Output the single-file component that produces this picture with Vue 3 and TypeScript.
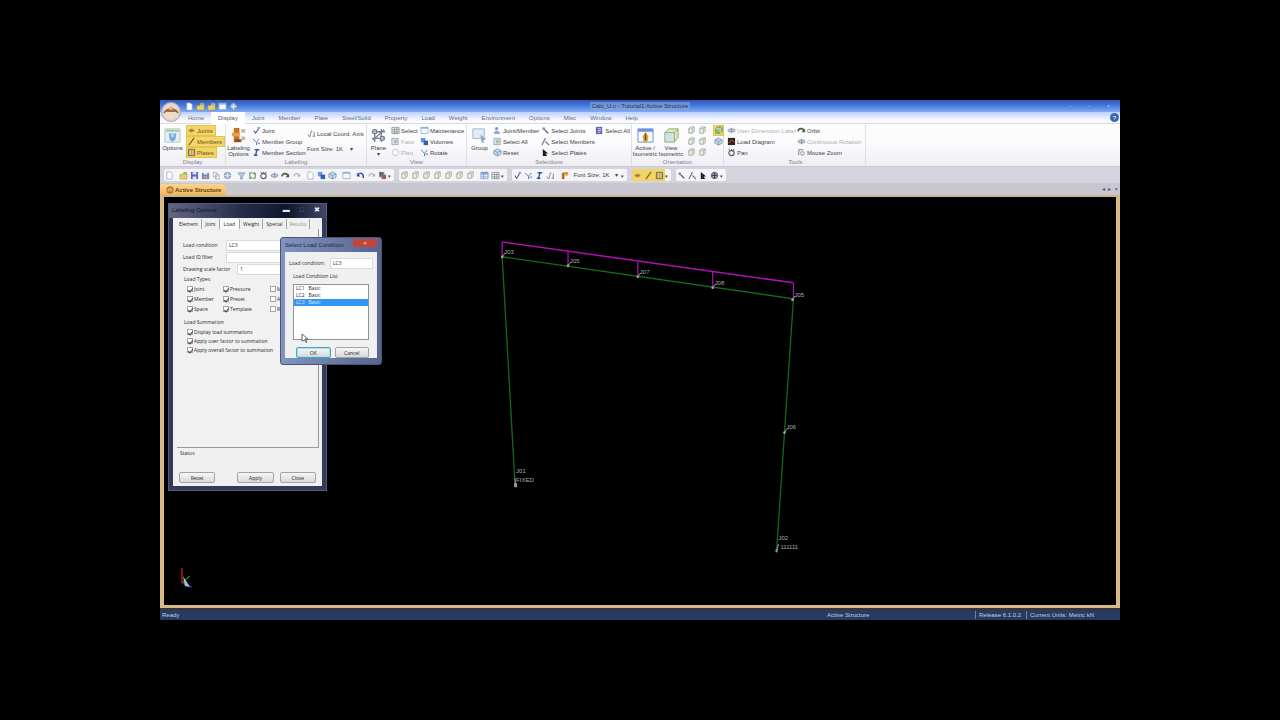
<script setup lang="ts">
import { ref } from 'vue'

interface Cmd { icon: string; label: string; dim?: boolean; on?: boolean }

const menuTabs = ['Home', 'Display', 'Joint', 'Member', 'Plate', 'Steel/Solid', 'Property', 'Load', 'Weight', 'Environment', 'Options', 'Misc', 'Window', 'Help']
const activeTab = ref('Display')

const quick = ['doc', 'folder', 'folder', 'window', 'globe']

const displayCmds: Cmd[] = [
  { icon: 'joint', label: 'Joints', on: true },
  { icon: 'member', label: 'Members', on: true },
  { icon: 'plate', label: 'Plates', on: true },
]
const labelCmds: Cmd[] = [
  { icon: 'check', label: 'Joint' },
  { icon: 'branch', label: 'Member Group' },
  { icon: 'section', label: 'Member Section' },
]
const viewCmds: Cmd[] = [
  { icon: 'grid', label: 'Select' },
  { icon: 'list', label: 'Face', dim: true },
  { icon: 'box', label: 'Plan', dim: true },
]
const viewCmds2: Cmd[] = [
  { icon: 'window', label: 'Maintenance' },
  { icon: 'blocks', label: 'Volumes' },
  { icon: 'branch', label: 'Rotate' },
]
const selCmds: Cmd[] = [
  { icon: 'person', label: 'Joint/Member' },
  { icon: 'list', label: 'Select All' },
  { icon: 'cube', label: 'Reset' },
]
const selCmds2: Cmd[] = [
  { icon: 'pick', label: 'Select Joints' },
  { icon: 'pickline', label: 'Select Members' },
  { icon: 'cursor', label: 'Select Plates' },
]
const toolCmds: Cmd[] = [
  { icon: 'orbit', label: 'User Dimension Label', dim: true },
  { icon: 'diagram', label: 'Load Diagram' },
  { icon: 'pan', label: 'Pan' },
]
const toolCmds2: Cmd[] = [
  { icon: 'redo', label: 'Orbit' },
  { icon: 'orbit', label: 'Continuous Rotation', dim: true },
  { icon: 'zoom', label: 'Mouse Zoom' },
]

const bars: string[][] = [
  ['doc', '', 'folder', 'save', 'print', 'copy', 'globe', '', 'glasses', 'refresh', 'pan', 'orbit', 'redo', 'redoDim', '', 'doc', 'blocks', 'cube', '', 'window', '', 'undo', 'redoDim', 'section2'],
  ['iso', 'iso', 'iso', 'iso', 'iso', 'iso', 'iso', '', 'table', 'grid'],
]
const bar3 = ['check', 'branch', 'section', 'axes', '', 'brush']
const bar4 = ['joint', 'member', 'plate']
const bar5 = ['pick', 'pickline', 'cursor', 'globe2']

const dialogTabs = ['Element', 'Joint', 'Load', 'Weight', 'Special', 'Results']
const loadTypes = ref([
  { label: 'Joint', on: true }, { label: 'Pressure', on: true }, { label: 'Miscellaneous', on: false },
  { label: 'Member', on: true }, { label: 'Preset', on: true }, { label: 'Auto', on: false },
  { label: 'Space', on: true }, { label: 'Template', on: true }, { label: 'Round', on: false },
])
const summations = ref([
  { label: 'Display load summations', on: true },
  { label: 'Apply user factor to summation', on: true },
  { label: 'Apply overall factor to summation', on: true },
])
const condition = ref('LC3')
const idFilter = ref('')
const scaleFactor = ref('1')
const picked = ref('LC3')
const conditions = ['LC1', 'LC2', 'LC3']

const nodes = [
  { x: 339, y: 59, name: 'J03' },
  { x: 405, y: 68, name: 'J05' },
  { x: 475, y: 79, name: 'J07' },
  { x: 550, y: 90, name: 'J08' },
  { x: 630, y: 102, name: 'J05' },
  { x: 622, y: 235, name: 'J06' },
]
const loads = [
  { x: 339, a: 44, b: 59 },
  { x: 405, a: 54, b: 68 },
  { x: 475, a: 64, b: 78 },
  { x: 550, a: 74, b: 89 },
  { x: 631, a: 85, b: 101 },
]
</script>

<template>
  <svg class="defs" aria-hidden="true">
    <symbol id="doc" viewBox="0 0 10 10"><path d="M2 1h4l2 2v6H2z" fill="#fff" stroke="#9aa5b5" stroke-width=".8" /></symbol>
    <symbol id="folder" viewBox="0 0 10 10"><path d="M1 4h3l1-2h4v7H1z" fill="#e9cf77" stroke="#a89042" stroke-width=".6" /><path d="M5 1h3v3H5z" fill="#9fb86a" /></symbol>
    <symbol id="save" viewBox="0 0 10 10"><path d="M1 1h8v8H1z" fill="#5a68c4" /><path d="M3 1h4v3H3zM3 6h4v3H3z" fill="#dde2f6" /></symbol>
    <symbol id="print" viewBox="0 0 10 10"><path d="M1 2h8v7H1z" fill="#7a86a8" /><path d="M3 1h4v3H3z" fill="#eceff5" /><path d="M3 6h4v2H3z" fill="#c9a9b5" /></symbol>
    <symbol id="copy" viewBox="0 0 10 10"><path d="M1.500 1.500h4v5h-4zM4 4h4v5H4z" fill="#f5f7fa" stroke="#96a0b2" stroke-width=".8" /></symbol>
    <symbol id="globe" viewBox="0 0 10 10"><circle cx="5" cy="5" r="3.500" fill="#a8c2dc" stroke="#6f8bae" /><path d="M1.500 5h7M5 1.500v7" stroke="#e8f1f8" stroke-width=".8" /></symbol>
    <symbol id="globe2" viewBox="0 0 10 10"><circle cx="5" cy="5" r="3.500" fill="#9aa0b8" stroke="#454b6a" /><path d="M2 5h6M5 2v6" stroke="#303655" /></symbol>
    <symbol id="glasses" viewBox="0 0 10 10"><path d="M1 2h8L6 6v3H4V6z" fill="#b5cadd" stroke="#718fae" stroke-width=".7" /></symbol>
    <symbol id="refresh" viewBox="0 0 10 10"><path d="M2 8V2h3M8 2v6H5" fill="none" stroke="#6c8f6b" stroke-width="1.200" /><path d="M6 1l3 2-3 1zM4 6L1 8l3 1z" fill="#5b855b" /></symbol>
    <symbol id="pan" viewBox="0 0 10 10"><circle cx="5" cy="5.500" r="3" fill="#f5f5f5" stroke="#555b65" stroke-width="1.200" /><path d="M2 1l2 3M5 1v2M8 1L6 4" stroke="#555b65" /></symbol>
    <symbol id="orbit" viewBox="0 0 10 10"><ellipse cx="5" cy="5" rx="4" ry="1.800" fill="#c9ced9" stroke="#8790a5" /><path d="M5 2v6" stroke="#8790a5" /></symbol>
    <symbol id="redo" viewBox="0 0 10 10"><path d="M1 6c1-4 5-4 7-1" fill="none" stroke="#456046" stroke-width="1.800" /><path d="M9 3v4H5z" fill="#456046" /></symbol>
    <symbol id="redoDim" viewBox="0 0 10 10"><path d="M2 6c1-4 4-4 6-1" fill="none" stroke="#a2a9b6" stroke-width="1.200" /><path d="M9 3v3H6z" fill="#a2a9b6" /></symbol>
    <symbol id="undo" viewBox="0 0 10 10"><path d="M2 4c3-3 7-1 6 4" fill="none" stroke="#3d4fae" stroke-width="1.600" /><path d="M1 2v4h4z" fill="#3d4fae" /></symbol>
    <symbol id="cube" viewBox="0 0 10 10"><path d="M5 1l4 2v4L5 9 1 7V3z" fill="#c6d9ee" stroke="#6f8fb7" stroke-width=".8" /><path d="M1 3l4 2 4-2M5 5v4" fill="none" stroke="#6f8fb7" stroke-width=".8" /></symbol>
    <symbol id="iso" viewBox="0 0 10 10"><path d="M2 3l2-2h4v5L6 8H2z" fill="#edf1e7" stroke="#969e8e" stroke-width=".9" /><path d="M2 3h4v5M6 3l2-2" fill="none" stroke="#a3ab99" stroke-width=".8" /></symbol>
    <symbol id="isoGreen" viewBox="0 0 10 10"><path d="M2 3l2-2h5v5L7 8H2z" fill="#8fc07c" stroke="#5c8f63" stroke-width=".9" /><path d="M2 3h5v5M7 3l2-2" fill="none" stroke="#d6ebc5" stroke-width=".8" /></symbol>
    <symbol id="blocks" viewBox="0 0 10 10"><path d="M1 1h5v5H1z" fill="#6a97d8" /><path d="M4 4h5v5H4z" fill="#2e62b0" /></symbol>
    <symbol id="window" viewBox="0 0 10 10"><path d="M1 1.500h8v7H1z" fill="#f4f8fc" stroke="#8ba6c6" stroke-width=".8" /><path d="M1 1h8v2H1z" fill="#94b2d8" /></symbol>
    <symbol id="table" viewBox="0 0 10 10"><path d="M1 1.500h8v7H1zM1 4h8M1 6.500h8M4 2v7" fill="#eef4fc" stroke="#7796c8" stroke-width=".8" /><path d="M1 1h8v2H1z" fill="#7796c8" /></symbol>
    <symbol id="grid" viewBox="0 0 10 10"><path d="M1 1.500h8v7H1zM1 4h8M1 6.500h8M4 2v7M6.500 2v7" fill="#f4f4f4" stroke="#7d8b82" stroke-width=".8" /></symbol>
    <symbol id="list" viewBox="0 0 10 10"><path d="M1 1.500h7v7H1zM3 3.500h4M3 5h4M3 6.500h4" fill="#e8ecf2" stroke="#8a93a5" stroke-width=".8" /></symbol>
    <symbol id="box" viewBox="0 0 10 10"><circle cx="5" cy="5" r="3.500" fill="#fbfbfb" stroke="#bcbcc4" /></symbol>
    <symbol id="joint" viewBox="0 0 10 10"><path d="M2 4h6v2H2zM4 3h2v4H4z" fill="#9a8640" /></symbol>
    <symbol id="member" viewBox="0 0 10 10"><path d="M2 9l6-8" stroke="#7c6523" stroke-width="1.400" /></symbol>
    <symbol id="plate" viewBox="0 0 10 10"><path d="M1.500 1.500h7v7h-7z" fill="#bba764" stroke="#6e6445" /><path d="M3.500 2v6M6.500 2v6" stroke="#e9d98f" /></symbol>
    <symbol id="check" viewBox="0 0 10 10"><path d="M2 5l2 3 4-6" fill="none" stroke="#52678f" stroke-width="1.300" /><path d="M6 1h3v2H6z" fill="#86a3da" /></symbol>
    <symbol id="branch" viewBox="0 0 10 10"><path d="M1 2l4 4v3M8 2L5 6" fill="none" stroke="#7282a3" stroke-width="1.100" /><path d="M6 6h3v2H6z" fill="#94add8" /></symbol>
    <symbol id="section" viewBox="0 0 10 10"><path d="M3 2h5M5.500 2L4 8M2 8h4" stroke="#3653a5" stroke-width="1.600" /></symbol>
    <symbol id="section2" viewBox="0 0 10 10"><path d="M1 1h6v6H1z" fill="#8b8fa0" /><path d="M4 4h5v5H4z" fill="#9d5c5c" /><path d="M2 3h4M3 1v5" stroke="#434757" /></symbol>
    <symbol id="axes" viewBox="0 0 10 10"><path d="M1 6l2 3L5 2h1M6 8h3M8 3v5" fill="none" stroke="#6d7684" stroke-width=".9" /></symbol>
    <symbol id="brush" viewBox="0 0 10 10"><path d="M2 2h3v7H2z" fill="#b2702a" /><path d="M4 1h5v4H5z" fill="#d99a4d" /></symbol>
    <symbol id="person" viewBox="0 0 10 10"><circle cx="4" cy="3" r="1.800" fill="#7d91cb" /><path d="M1 9c0-5 6-5 7 0z" fill="#92a5d6" /></symbol>
    <symbol id="pick" viewBox="0 0 10 10"><circle cx="3" cy="3" r="1.600" fill="#8b93a9" /><path d="M4 4l4 4" stroke="#4f5878" stroke-width="1.400" /></symbol>
    <symbol id="pickline" viewBox="0 0 10 10"><path d="M1 9l4-8M5 5l4 4" fill="none" stroke="#6b7492" stroke-width="1.300" /></symbol>
    <symbol id="cursor" viewBox="0 0 10 10"><path d="M2 1l6 5H5l2 3H2z" fill="#1c1e28" /></symbol>
    <symbol id="diagram" viewBox="0 0 10 10"><path d="M1 1h8v8H1z" fill="#35231b" /><path d="M2 7l3-4 3 3" fill="none" stroke="#ab6b43" /></symbol>
    <symbol id="zoom" viewBox="0 0 10 10"><path d="M2 8V2h5" fill="none" stroke="#74787f" /><circle cx="6" cy="6" r="2" fill="#f0f0f0" stroke="#8b929b" /></symbol>
    <symbol id="allsel" viewBox="0 0 10 10"><path d="M1 1h7v8H1z" fill="#5d63ac" /><path d="M3 3h4M3 5h4M3 7h3" stroke="#dcdcf5" /></symbol>
    <symbol id="bigOptions" viewBox="0 0 18 18"><path d="M1 2h16v14H1z" fill="#e6eef2" stroke="#b5c7c9" /><path d="M2 3h14v2H2z" fill="#a5c79b" /><path d="M5 7h8l-1 6-3 3-3-3z" fill="#6ea8de" /><circle cx="9" cy="9" r="2" fill="#a8d0f2" /></symbol>
    <symbol id="bigLabel" viewBox="0 0 18 18"><path d="M4 1h6v15H4z" fill="#c47224" /><path d="M2 6h8v4H2z" fill="#e3a14b" /><path d="M12 2h4v4h-4zM12 10h4v4h-4z" fill="#c9b7a6" /><path d="M5 13h7v3H5z" fill="#8b4c20" /></symbol>
    <symbol id="bigPlane" viewBox="0 0 18 18"><path d="M2 5h14M2 12h14M5 2v14M12 2v14M3 14L15 3" fill="none" stroke="#797f8d" stroke-width="1.400" /><path d="M3 3h4v4H3zM11 10h4v4h-4z" fill="#b9bfcc" stroke="#6c7283" /></symbol>
    <symbol id="bigGroup" viewBox="0 0 18 18"><path d="M2 2h12v10H2z" fill="#e2edf8" stroke="#9fb6d2" /><path d="M10 8l6 5-3 1 1 3-3-1z" fill="#8fa4c6" /></symbol>
    <symbol id="bigActive" viewBox="0 0 18 18"><path d="M1 2h16v14H1z" fill="#f4f8fd" stroke="#7294cc" /><path d="M1 2h16v3H1z" fill="#6b93d6" /><path d="M9 5l3 5-1 6H7L6 10z" fill="#e0a22c" /><path d="M9 7v7" stroke="#714d16" stroke-width="1.500" /></symbol>
    <symbol id="bigIso" viewBox="0 0 18 18"><path d="M2 6l4-4h10v9l-4 5H2z" fill="#dcebc2" stroke="#8da371" /><path d="M2 6h10v10M12 6l4-4" fill="none" stroke="#8da371" /><path d="M3 7h8v8H3z" fill="#cee3ea" /></symbol>
  </svg>

  <main class="stage">
    <div class="app">
      <header class="titlebar">
        <div class="quick">
          <button v-for="(q, i) in quick" :key="i" :aria-label="q"><svg class="ic"><use :href="'#' + q" /></svg></button>
        </div>
        <h1>Calc_U.c - Tutorial1:Active Structure</h1>
        <div class="winbtns"><span>–</span><span>▫</span><span>×</span></div>
      </header>
      <nav class="menu">
        <button v-for="t in menuTabs" :key="t" :class="{ active: t === activeTab }" @click="activeTab = t">{{ t }}</button>
        <button class="help" aria-label="About">?</button>
      </nav>
      <button class="orb" aria-label="Application menu">
        <svg viewBox="0 0 22 22"><circle cx="11" cy="11" r="9.500" fill="#d9d5dc" stroke="#b6a59f" /><circle cx="11" cy="11" r="7" fill="#f0dcc4" /><path d="M4 12c3-5 11-5 14 0M5 10h12" fill="none" stroke="#9b6b5d" stroke-width="2" /><circle cx="11" cy="7" r="2" fill="#e9b873" /></svg>
      </button>

      <section class="ribbon">
        <div class="group g-display">
          <div class="body">
            <button class="big"><svg><use href="#bigOptions" /></svg><span>Options</span></button>
            <div class="col toggles">
              <button v-for="c in displayCmds" :key="c.label" class="cmd on"><svg class="ic"><use :href="'#' + c.icon" /></svg>{{ c.label }}</button>
            </div>
          </div>
          <div class="caption">Display</div>
        </div>
        <div class="group g-label">
          <div class="body">
            <button class="big"><svg><use href="#bigLabel" /></svg><span>Labeling<br>Options</span></button>
            <div class="col c-label">
              <button v-for="c in labelCmds" :key="c.label" class="cmd"><svg class="ic"><use :href="'#' + c.icon" /></svg>{{ c.label }}</button>
            </div>
            <div class="col loose">
              <button class="cmd"><svg class="ic"><use href="#axes" /></svg>Local Coord. Axis</button>
              <button class="cmd">Font Size: 1K <span class="arrow">▾</span></button>
            </div>
          </div>
          <div class="caption">Labeling</div>
        </div>
        <div class="group g-view">
          <div class="body">
            <button class="big"><svg><use href="#bigPlane" /></svg><span>Plane<br>▾</span></button>
            <div class="col c-view">
              <button v-for="c in viewCmds" :key="c.label" class="cmd" :class="{ dim: c.dim }"><svg class="ic"><use :href="'#' + c.icon" /></svg>{{ c.label }}</button>
            </div>
            <div class="col">
              <button v-for="c in viewCmds2" :key="c.label" class="cmd"><svg class="ic"><use :href="'#' + c.icon" /></svg>{{ c.label }}</button>
            </div>
          </div>
          <div class="caption">View</div>
        </div>
        <div class="group g-sel">
          <div class="body">
            <button class="big"><svg><use href="#bigGroup" /></svg><span>Group</span></button>
            <div class="col c-sel">
              <button v-for="c in selCmds" :key="c.label" class="cmd"><svg class="ic"><use :href="'#' + c.icon" /></svg>{{ c.label }}</button>
            </div>
            <div class="col c-sel2">
              <button v-for="c in selCmds2" :key="c.label" class="cmd"><svg class="ic"><use :href="'#' + c.icon" /></svg>{{ c.label }}</button>
            </div>
            <div class="col">
              <button class="cmd"><svg class="ic"><use href="#allsel" /></svg>Select All</button>
            </div>
          </div>
          <div class="caption">Selections</div>
        </div>
        <div class="group g-orient">
          <div class="body">
            <button class="big"><svg><use href="#bigActive" /></svg><span>Active /<br>Isometric</span></button>
            <button class="big"><svg><use href="#bigIso" /></svg><span>View<br>Isometric</span></button>
            <div class="isos">
              <button v-for="n in 6" :key="n" :aria-label="'View ' + n"><svg class="ic"><use href="#iso" /></svg></button>
            </div>
            <div class="col">
              <button class="cmd on" aria-label="Shaded"><svg class="ic"><use href="#isoGreen" /></svg></button>
              <button class="cmd" aria-label="Solid"><svg class="ic"><use href="#cube" /></svg></button>
            </div>
          </div>
          <div class="caption">Orientation</div>
        </div>
        <div class="group g-tools">
          <div class="body">
            <div class="col c-tools">
              <button v-for="c in toolCmds" :key="c.label" class="cmd" :class="{ dim: c.dim }"><svg class="ic"><use :href="'#' + c.icon" /></svg>{{ c.label }}</button>
            </div>
            <div class="col">
              <button v-for="c in toolCmds2" :key="c.label" class="cmd" :class="{ dim: c.dim }"><svg class="ic"><use :href="'#' + c.icon" /></svg>{{ c.label }}</button>
            </div>
          </div>
          <div class="caption">Tools</div>
        </div>
      </section>

      <div class="toolbars">
        <div v-for="(b, k) in bars" :key="k" class="bar">
          <template v-for="(n, i) in b" :key="i">
            <button v-if="n" :aria-label="n"><svg class="ic"><use :href="'#' + n" /></svg></button>
            <i v-else class="sep"></i>
          </template>
          <span class="more">▾</span>
        </div>
        <div class="bar">
          <template v-for="(n, i) in bar3" :key="i">
            <button v-if="n" :aria-label="n"><svg class="ic"><use :href="'#' + n" /></svg></button>
            <i v-else class="sep"></i>
          </template>
          <button class="fontsize">Font Size: 1K <span>▾</span></button>
          <span class="more">▾</span>
        </div>
        <div class="bar lit">
          <button v-for="n in bar4" :key="n" :aria-label="n"><svg class="ic"><use :href="'#' + n" /></svg></button>
          <span class="more">▾</span>
        </div>
        <div class="bar">
          <button v-for="n in bar5" :key="n" :aria-label="n"><svg class="ic"><use :href="'#' + n" /></svg></button>
          <span class="more">▾</span>
        </div>
      </div>

      <div class="doctabs">
        <button class="doctab"><svg viewBox="0 0 10 10"><circle cx="5" cy="5" r="4" fill="#d98e48" stroke="#94551f" /><path d="M2 6c2-3 4-3 6 0" fill="none" stroke="#fbe1bd" /></svg>Active Structure</button>
        <div class="docbtns"><span>◂</span><span>▸</span><span>×</span></div>
      </div>

      <section class="pane">
        <svg class="model" viewBox="0 -1 952 409" preserveAspectRatio="xMinYMin meet">
          <path d="M352 289L339 59L631 101L614 355" fill="none" stroke="#146b1a" stroke-width="1.300" />
          <path d="M339 44L631 85" stroke="#b010ae" stroke-width="1.500" />
          <path v-for="l in loads" :key="l.x" :d="`M${l.x} ${l.a}V${l.b}`" stroke="#9c1298" stroke-width="1.400" />
          <g v-for="n in nodes" :key="n.x">
            <path :d="`M${n.x} ${n.y}l3 -4`" stroke="#8f948f" />
            <circle :cx="n.x" :cy="n.y" r="1.300" fill="#a9a9a9" />
            <text :x="n.x + 2" :y="n.y - 3">{{ n.name }}</text>
          </g>
          <path d="M352 289v-8M614 355l2 -8" stroke="#9aa09a" />
          <path d="M351 286h3v4h-3zM613 352h2v3h-2z" fill="#9a9a9a" />
          <text x="353" y="276">J01</text>
          <text x="353" y="285">FIXED</text>
          <text x="616" y="343">J02</text>
          <text x="618" y="352">111111</text>
          <path d="M18 386V371" stroke="#b01818" stroke-width="1.500" />
          <path d="M18 386l10 4" stroke="#2222c8" stroke-width="1.500" />
          <path d="M18 386l8-7" stroke="#1c7c28" stroke-width="1.200" />
          <path d="M19 379l7 11-5-1z" fill="#b9bfc2" />
        </svg>

        <form class="dialog labeling" @submit.prevent>
          <div class="dlgtitle"><span class="name">Labeling Options</span><span class="ctl">▬</span><span class="ctl faint">□</span><span class="ctl">✖</span></div>
          <div class="client">
            <div class="dlgtabs">
              <button v-for="t in dialogTabs" :key="t" type="button" :class="{ active: t === 'Load', dim: t === 'Results' }">{{ t }}</button>
            </div>
            <div class="page">
              <div class="field"><label for="lc">Load condition</label><input id="lc" v-model="condition"></div>
              <div class="field"><label for="lid">Load ID filter</label><input id="lid" v-model="idFilter"></div>
              <div class="field wide"><label for="dsf">Drawing scale factor</label><input id="dsf" v-model="scaleFactor"></div>
              <fieldset class="types">
                <legend>Load Types</legend>
                <label v-for="t in loadTypes" :key="t.label"><input v-model="t.on" type="checkbox">{{ t.label }}</label>
              </fieldset>
              <fieldset class="sums">
                <legend>Load Summation</legend>
                <label v-for="s in summations" :key="s.label"><input v-model="s.on" type="checkbox">{{ s.label }}</label>
              </fieldset>
            </div>
            <div class="status-note">Status</div>
            <div class="actions"><button type="button" class="push first">Reset</button><button type="button" class="push">Apply</button><button type="button" class="push">Close</button></div>
          </div>
        </form>

        <form class="dialog picker" @submit.prevent>
          <div class="dlgtitle"><span class="name">Select Load Condition</span><button type="button" class="close" aria-label="Close">×</button></div>
          <div class="client">
            <div class="field"><label for="plc">Load condition:</label><input id="plc" v-model="condition"></div>
            <label class="listlabel" for="plist">Load Condition List</label>
            <select id="plist" v-model="picked" size="4">
              <option v-for="c in conditions" :key="c" :value="c">{{ c }}&nbsp;&nbsp; Basic</option>
            </select>
            <div class="actions"><button class="push ok">OK</button><button type="button" class="push">Cancel</button></div>
          </div>
          <svg class="pointer" viewBox="0 0 8 10"><path d="M1 1l6 5H4l2 3-1 .5L3.500 7 1 8z" fill="#fff" stroke="#444" stroke-width=".8" /></svg>
        </form>
      </section>

      <footer class="statusbar">
        <span class="ready">Ready</span>
        <span class="struct">Active Structure</span>
        <span class="rel">Release 6.1.0.2</span>
        <span class="units">Current Units: Metric kN</span>
      </footer>
    </div>
  </main>
</template>

<style>
body { margin: 0; background: #000; }
</style>

<style scoped>
* { box-sizing: border-box; }
.defs { position: absolute; width: 0; height: 0; }
.stage { min-height: 100vh; padding: 100px 12.5%; display: flex; background: #000; font: 6px/8px "Liberation Sans", Arial, sans-serif; color: #3b3e47; }
.app { position: relative; flex: 1; min-width: 0; display: flex; flex-direction: column; }
button { font: inherit; color: inherit; background: none; border: 0; padding: 0; margin: 0; white-space: nowrap; display: flex; align-items: center; }
input, select { font: inherit; color: inherit; }
h1 { margin: 0; font: inherit; }
.ic { width: 9px; height: 9px; flex: none; display: block; }

.titlebar { height: 12px; display: grid; grid-template-columns: 1fr auto 1fr; align-items: center; background: linear-gradient(#3259b4, #4377dd 45%, #82acf2); }
.titlebar h1 { padding: 0 2px; background: rgba(150, 170, 215, .55); color: #25365f; }
.quick { display: flex; gap: 2px; padding-left: 25px; }
.winbtns { display: flex; justify-content: flex-end; gap: 16px; padding-right: 10px; color: #aebbd0; }
.menu { height: 12px; display: flex; align-items: stretch; padding-left: 21px; background: linear-gradient(#b9d1fa, #eef3fd 60%, #fdfdff); border-bottom: 1px solid #dad9dc; color: #626d85; }
.menu button { padding: 0 7px; }
.menu .active { background: #fff; margin-bottom: -1px; color: #50596e; }
.menu .help { margin: 1px 1px 1px auto; width: 9px; height: 9px; padding: 0; justify-content: center; border-radius: 50%; background: #3b67a9; color: #fff; }
.orb { position: absolute; left: 0; top: 1px; width: 22px; height: 22px; }
.orb svg { width: 22px; height: 22px; }

.ribbon { height: 43px; display: flex; background: linear-gradient(#fefefe, #fbfbfd 45%, #eeeef3); border-bottom: 1px solid #cbcad2; }
.group { flex: none; display: flex; flex-direction: column; justify-content: space-between; border-right: 1px solid #dfdfe5; }
.body { display: flex; padding-top: 1px; }
.caption { text-align: center; color: #80838e; line-height: 7px; }
.g-display { width: 66px; }
.g-label { width: 141px; }
.g-view { width: 100px; }
.g-sel { width: 165px; }
.g-orient { width: 92px; }
.g-tools { width: 142px; padding-left: 2px; }
.big { width: 25px; flex: none; flex-direction: column; padding-top: 2px; line-height: 6px; text-align: center; }
.big svg { width: 17px; height: 17px; margin-bottom: 1px; }
.col { display: flex; flex-direction: column; align-items: flex-start; }
.cmd { height: 11px; padding: 0 1px; gap: 1px; }
.on { background: #f3d569; box-shadow: inset 0 0 0 1px #e5c34f; color: #65531f; }
.toggles { padding-left: 1px; }
.toggles .cmd { padding-right: 3px; }
.dim { color: #acafb8; }
.c-label { width: 55px; }
.loose { padding-top: 3px; gap: 4px; }
.arrow { margin-left: 6px; }
.g-view .big { width: 23px; }
.c-view { width: 29px; }
.c-sel { width: 50px; }
.c-sel2 { width: 54px; }
.isos { display: grid; grid-template-columns: 11px 11px; grid-auto-rows: 11px; margin: 0 4px 0 3px; align-items: center; }
.g-orient .cmd { width: 11px; padding: 0 1px; }
.g-orient .big { width: 26px; }
.c-tools { width: 70px; }

.toolbars { height: 16px; display: flex; align-items: center; gap: 5px; padding-left: 4px; background: #d5d4de; }
.bar { flex: none; height: 12px; display: flex; align-items: center; background: #f5f5f8; border-radius: 2px; }
.bar button { width: 11px; height: 12px; justify-content: center; }
.sep { width: 3px; }
.more { width: 6px; font-size: 5px; line-height: 12px; padding-top: 2px; }
.bar .fontsize { width: 51px; gap: 5px; }
.lit button { background: #f3d567; }

.doctabs { height: 12px; display: flex; align-items: flex-end; justify-content: space-between; background: #c8c6cf; }
.doctab { height: 11px; gap: 1px; padding: 0 5px 0 6px; background: linear-gradient(#fbd48c, #f0b75f); border-radius: 0 5px 0 0; color: #633f12; font-weight: bold; }
.doctab svg { width: 8px; height: 8px; }
.docbtns { display: flex; gap: 3px; padding-right: 2px; line-height: 11px; color: #51535d; }

.pane { position: relative; flex: 1; min-height: 409px; border: 4px solid #d9b986; border-width: 2px 4px 3px; border-top-color: #cbb58d; background: #000; }
.model { position: absolute; inset: 0; width: 100%; height: 100%; }
.model text { font: 6px "Liberation Sans", Arial, sans-serif; fill: #a9aaa9; }

.dialog { position: absolute; display: flex; flex-direction: column; }
.labeling { left: 4px; top: 6px; width: 159px; height: 288px; padding: 0 4px 4px; background: #333a5a; border: 1px solid #555b7c; }
.dlgtitle { height: 14px; display: flex; align-items: center; gap: 4px; }
.name { flex: 1; white-space: nowrap; }
.labeling .dlgtitle { margin: 0 -4px; padding: 0 6px 2px 3px; background: linear-gradient(90deg, #626784, #272e4c 45%, #10162c 75%, #3f4767); color: #1c1f30; gap: 10px; }
.labeling .name { color: #12141f; }
.ctl { color: #e9edf6; font-size: 7px; }
.faint { color: #6b7493; }
.client { flex: 1; min-height: 0; display: flex; flex-direction: column; background: #f0f0f0; color: #26272c; font: 5px/8px "Open Sans", "Liberation Sans", sans-serif; }
.dlgtabs { display: flex; padding: 1px 0 0 3px; }
.dlgtabs button { height: 10px; padding: 0 3px; border-right: 1px solid #a5a5a8; }
.dlgtabs .active { background: #fafafa; padding: 0 4px; }
.dlgtabs .dim { color: #92949a; }
.page { flex: 1; margin: 0 3px 0 4px; padding: 10px 0 0 6px; border: 0 solid #999; border-width: 0 1px 1px 0; background: #f1f1f1; overflow: hidden; }
.field { display: flex; align-items: center; height: 12px; }
.field label { width: 43px; white-space: nowrap; }
.field input { flex: 1; min-width: 0; height: 11px; padding: 0 2px; border: 1px solid #dadada; background: #fff; }
.wide label { width: 54px; }
fieldset { border: 0; margin: 0; padding: 0 0 0 4px; min-width: 0; }
legend { padding: 0; margin-left: -3px; }
.types { display: grid; grid-template-columns: 36px 47px 1fr; grid-auto-rows: 10px; align-items: center; padding-top: 1px; }
.sums { display: grid; grid-auto-rows: 9px; align-items: center; margin-top: 4px; padding-top: 1px; }
fieldset label { display: flex; align-items: center; gap: 1px; white-space: nowrap; }
input[type="checkbox"] { appearance: none; flex: none; width: 6px; height: 6px; margin: 0; border: 1px solid #a3a5ab; background: #fff; display: grid; place-items: center; }
input[type="checkbox"]:checked::after { content: ""; width: 2px; height: 4px; border: solid #3d4256; border-width: 0 1px 1px 0; transform: rotate(40deg); }
.status-note { padding: 1px 7px 0; height: 24px; }
.push { height: 11px; width: 37px; justify-content: center; border: 1px solid #a3a3a6; border-radius: 2px; background: linear-gradient(#f6f6f6, #d9d9db); }
.actions { display: flex; gap: 6px; padding: 0 6px 3px; }
.first { margin-right: 16px; }

.picker { left: 116px; top: 40px; width: 102px; height: 128px; padding: 0 4px 6px; border: 1px solid #4a5474; border-radius: 3px; background: linear-gradient(90deg, #8294c0, #56648e); }
.picker .dlgtitle { padding-bottom: 1px; color: #1f2a47; }
.close { width: 24px; height: 8px; justify-content: center; background: #c2463c; border-radius: 0 0 2px 2px; color: #f3dada; margin-bottom: 4px; }
.picker .client { padding: 5px 4px 0; }
.picker .field label { width: 41px; }
.listlabel { padding: 3px 0 4px 4px; }
.picker select { appearance: none; display: block; width: 76px; height: 56px; margin-left: 4px; padding: 0; border: 1px solid #8d939c; background: #fff; overflow: hidden; border-radius: 0; outline: 0; }
.picker option { min-height: 0; height: 7px; padding: 0 2px; font: 5px/7px "Open Sans", "Liberation Sans", sans-serif; }
.picker option:checked { background: #3395f3 linear-gradient(#3395f3, #3395f3); color: #d7ebff; }
.picker .actions { padding: 7px 4px 0 7px; gap: 4px; }
.ok { border-color: #45a7bd; box-shadow: inset 0 0 0 1px #a7e1ed; }
.pointer { position: absolute; left: 20px; top: 95px; width: 8px; height: 10px; }

.statusbar { height: 12px; display: grid; grid-template-columns: 1fr 148px 51px 94px; align-items: center; padding-left: 2px; border-top: 2px solid #34363c; background: #273b62; color: #c6cedd; }
.rel, .units { border-left: 1px solid #76829c; padding-left: 3px; }
</style>
